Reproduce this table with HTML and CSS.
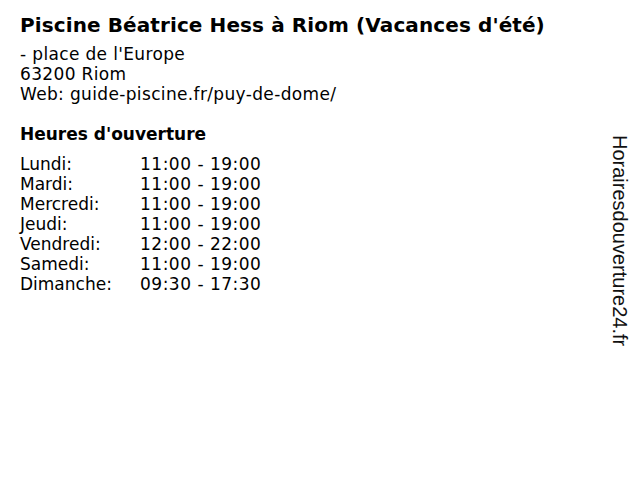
FILE: index.html
```html
<!DOCTYPE html>
<html lang="fr">
<head>
<meta charset="utf-8">
<link rel="stylesheet" href="styles.css">
</head>
<body>
<div class="page">
  <main class="content">
    <h1 class="title">Piscine Béatrice Hess à Riom (Vacances d'été)</h1>
    <div class="address">
      <div>- place de l'Europe</div>
      <div>63200 Riom</div>
      <div>Web: guide-piscine.fr/puy-de-dome/</div>
    </div>
    <h2 class="subtitle">Heures d'ouverture</h2>
    <div class="hours">
      <div class="row"><span class="day">Lundi:</span><span class="time">11:00 - 19:00</span></div>
      <div class="row"><span class="day">Mardi:</span><span class="time">11:00 - 19:00</span></div>
      <div class="row"><span class="day">Mercredi:</span><span class="time">11:00 - 19:00</span></div>
      <div class="row"><span class="day">Jeudi:</span><span class="time">11:00 - 19:00</span></div>
      <div class="row"><span class="day">Vendredi:</span><span class="time">12:00 - 22:00</span></div>
      <div class="row"><span class="day">Samedi:</span><span class="time">11:00 - 19:00</span></div>
      <div class="row"><span class="day">Dimanche:</span><span class="time">09:30 - 17:30</span></div>
    </div>
  </main>
  <aside class="brand">Horairesdouverture24.fr</aside>
</div>
</body>
</html>
```
FILE: styles.css
```css
html, body {
  margin: 0;
  padding: 0;
  background: #fff;
}
.page {
  width: 640px;
  height: 480px;
  display: flex;
  justify-content: space-between;
  font-family: "DejaVu Sans", sans-serif;
  color: #000;
}
.content {
  padding: 13px 0 0 20px;
}
.title {
  margin: 0;
  font-size: 20px;
  line-height: 24px;
  font-weight: bold;
  letter-spacing: 0.1px;
}
.address {
  margin-top: 7px;
  font-size: 17px;
  line-height: 20px;
  letter-spacing: 0.35px;
}
.subtitle {
  margin: 20px 0 0;
  font-size: 17px;
  line-height: 20px;
  font-weight: bold;
}
.hours {
  margin-top: 10px;
  font-size: 17px;
  line-height: 20px;
}
.row {
  display: flex;
}
.day {
  width: 120px;
}
.time {
  letter-spacing: 0.5px;
}
.brand {
  writing-mode: vertical-rl;
  font-family: "Liberation Sans", Arial, sans-serif;
  font-size: 20px;
  padding: 135px 9px 0 0;
  color: #111;
}
```
